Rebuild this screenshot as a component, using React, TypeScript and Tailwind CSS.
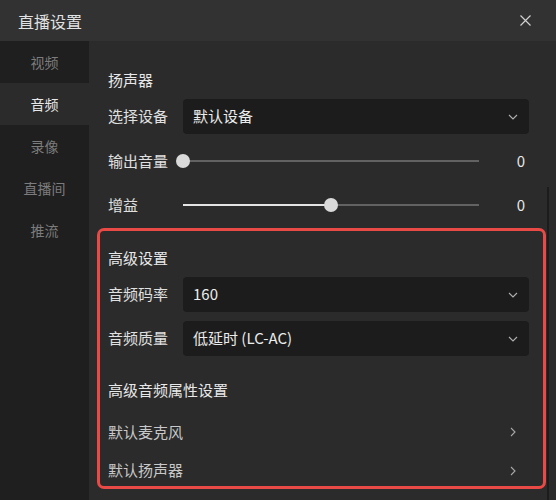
import { ReactNode } from 'react';

const FONT = { fontFamily: '"Noto Sans CJK SC", "Noto Sans", sans-serif' };

const NAV = ['视频', '音频', '录像', '直播间', '推流'];

function ChevronDown() {
  return (
    <svg width="10" height="6" viewBox="0 0 10 6" fill="none" stroke="#b0b0b0" strokeWidth="1.1">
      <path d="M1 1l4 4 4-4" />
    </svg>
  );
}

function ChevronRight() {
  return (
    <svg width="6" height="10" viewBox="0 0 6 10" fill="none" stroke="#a8a8a8" strokeWidth="1.1">
      <path d="M1 1l4 4-4 4" />
    </svg>
  );
}

function SelectRow({ label, value }: { label: string; value: string }) {
  return (
    <div className="flex items-center h-[35px]">
      <span className="w-[75px] shrink-0 text-[15px] text-[#e0e0e0]">{label}</span>
      <div className="flex-1 h-full flex items-center justify-between rounded-[4px] bg-[#1c1c1c] pl-[10px] pr-[11px]">
        <span className="text-[15px] text-[#ececec]">{value}</span>
        <ChevronDown />
      </div>
    </div>
  );
}

function SliderRow({ label, percent }: { label: string; percent: number }) {
  return (
    <div className="flex items-center h-[44px]">
      <span className="w-[75px] shrink-0 text-[15px] text-[#e0e0e0]">{label}</span>
      <div className="relative flex-1 h-[14px] flex items-center">
        <div className="w-full h-[2px] bg-[#626262]" />
        <div className="absolute left-0 h-[2px] bg-[#e4e4e4]" style={{ width: `${percent}%` }} />
        <div
          className="absolute w-[14px] h-[14px] -ml-[7px] rounded-full bg-[#dadada]"
          style={{ left: `${percent}%` }}
        />
      </div>
      <span className="w-[50px] shrink-0 text-right pr-[4px] text-[15px] text-[#e6e6e6]">0</span>
    </div>
  );
}

function Heading({ children }: { children: ReactNode }) {
  return <div className="h-[22px] flex items-center text-[15px] text-[#e8e8e8]">{children}</div>;
}

export default function App() {
  return (
    <div className="w-[556px] h-[500px] flex flex-col bg-[#2b2b2b] overflow-hidden" style={FONT}>
      {/* Title bar */}
      <div className="h-[41px] shrink-0 flex items-center justify-between bg-[#323232] pl-[18px] pr-[25px]">
        <span className="text-[16px] text-[#e2e2e2]">直播设置</span>
        <svg width="11" height="11" viewBox="0 0 11 11" stroke="#d0d0d0" strokeWidth="1.2">
          <path d="M0.5 0.5l10 10M10.5 0.5l-10 10" />
        </svg>
      </div>

      <div className="flex flex-1 min-h-0">
        {/* Sidebar */}
        <div className="w-[89px] shrink-0 bg-[#1f1f1f] flex flex-col">
          {NAV.map((item) => (
            <div
              key={item}
              className={
                item === '音频'
                  ? 'h-[42px] flex items-center justify-center text-[14px] text-[#e8e8e8] bg-[#2b2b2b]'
                  : 'h-[42px] flex items-center justify-center text-[14px] text-[#7c7c7c]'
              }
            >
              {item}
            </div>
          ))}
        </div>

        {/* Content */}
        <div className="relative flex-1 flex flex-col">
          <div className="pl-[19px] pr-[27px] pt-[28px]">
            <Heading>扬声器</Heading>
            <div className="mt-[8px]">
              <SelectRow label="选择设备" value="默认设备" />
            </div>
            <div className="mt-[5px]">
              <SliderRow label="输出音量" percent={0} />
              <SliderRow label="增益" percent={50} />
            </div>
          </div>

          {/* Highlighted advanced settings */}
          <div className="mt-[1px] ml-[8px] mr-[10px] rounded-[7px] border-[3px] border-[#e94a46] pl-[8px] pr-[14px] pt-[16px]">
            <Heading>高级设置</Heading>
            <div className="mt-[8px] flex flex-col gap-[9px]">
              <SelectRow label="音频码率" value="160" />
              <SelectRow label="音频质量" value="低延时 (LC-AC)" />
            </div>
            <div className="mt-[23px]">
              <Heading>高级音频属性设置</Heading>
            </div>
            <div className="mt-[12px] h-[38px] flex items-center justify-between pr-[13px]">
              <span className="text-[15px] text-[#c8c8c8]">默认麦克风</span>
              <ChevronRight />
            </div>
            <div className="h-[35px] pt-[4px] flex items-center justify-between pr-[13px]">
              <span className="text-[15px] text-[#c8c8c8]">默认扬声器</span>
              <ChevronRight />
            </div>
          </div>

          {/* Scrollbar */}
          <div className="absolute right-[7px] top-[146px] bottom-0 w-[2px] bg-[#1c1c1c]" />
        </div>
      </div>
    </div>
  );
}
